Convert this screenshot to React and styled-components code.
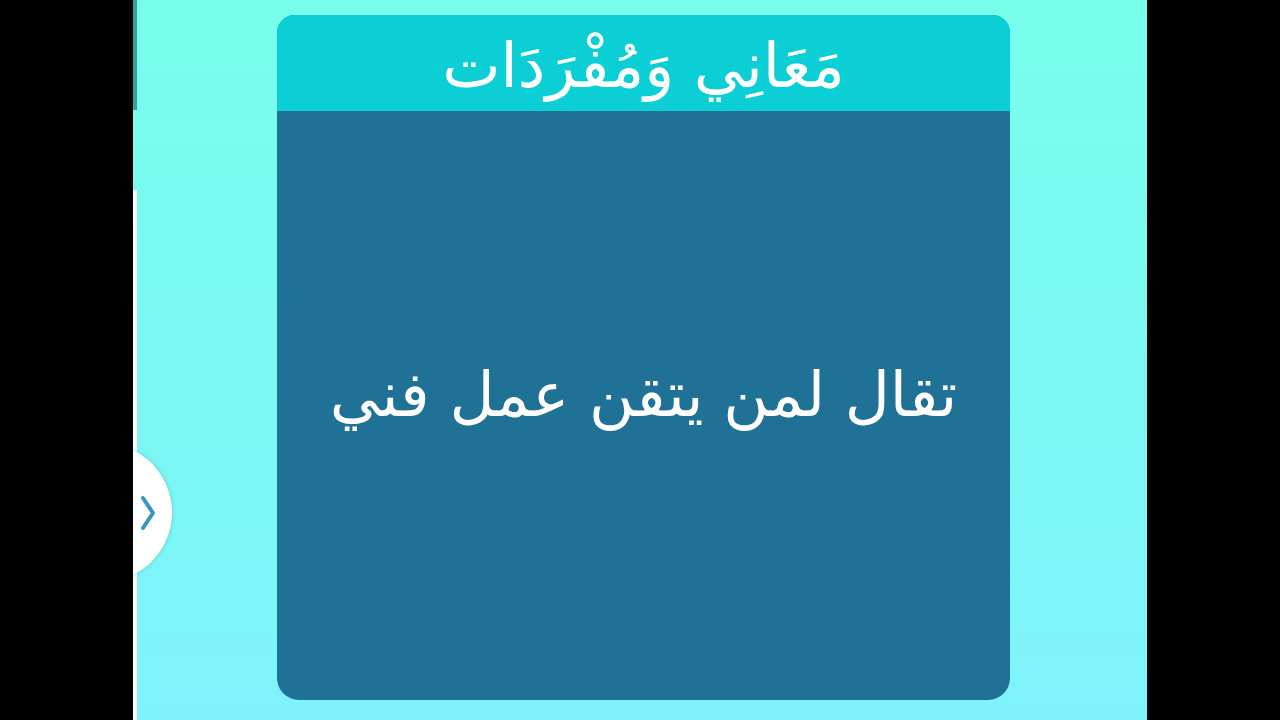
import styled, { createGlobalStyle } from 'styled-components';

const Global = createGlobalStyle`
  html, body { margin: 0; padding: 0; background: #000; }
  body { font-family: "DejaVu Sans", "Noto Sans", sans-serif; }
`;

const Screen = styled.div`
  width: 1280px;
  height: 720px;
  display: flex;
  background: #000;
  overflow: hidden;
`;

const Side = styled.div`
  width: ${p => p.$w}px;
  flex-shrink: 0;
  background: #000;
`;

const Stage = styled.main`
  position: relative;
  width: 1014px;
  height: 720px;
  display: flex;
  overflow: hidden;
  background: linear-gradient(180deg, #78fdeb 0%, #7bf8f2 50%, #7ff3fc 100%);
`;

const EdgeStrip = styled.div`
  width: 4px;
  flex-shrink: 0;
  display: flex;
  flex-direction: column;
`;

const EdgePart = styled.div`
  height: ${p => (p.$h ? `${p.$h}px` : 'auto')};
  flex: ${p => (p.$h ? 'none' : 1)};
  background: ${p => p.$c};
`;

const CardArea = styled.div`
  flex: 1;
  display: flex;
  padding: 15px 137px 20px 140px;
`;

const Card = styled.section`
  flex: 1;
  display: flex;
  flex-direction: column;
  border-radius: 18px 18px 22px 22px;
  overflow: hidden;
  background: #1f7196;
`;

const Header = styled.header`
  height: 96px;
  background: #0ccfd6;
  display: flex;
  align-items: center;
  justify-content: center;
  color: #fff;
  font-size: 62px;
  line-height: 1;
  padding-top: 6px;
  box-sizing: border-box;
`;

const Body = styled.div`
  flex: 1;
  display: flex;
  align-items: center;
  justify-content: center;
  color: #fff;
  font-size: 62px;
  line-height: 1;
  padding-bottom: 22px;
`;

const SideTab = styled.button`
  position: absolute;
  left: -100px;
  top: 443px;
  width: 139px;
  height: 139px;
  border: none;
  border-radius: 50%;
  background: #fff;
  box-shadow: 0 0 4px rgba(0, 80, 90, 0.25);
  display: flex;
  align-items: center;
  justify-content: flex-end;
  padding: 0 16px 0 0;
  cursor: pointer;
`;

export default function App() {
  return (
    <Screen>
      <Global />
      <Side $w={133} />
      <Stage>
        <EdgeStrip>
          <EdgePart $h={110} $c="#2aa49c" />
          <EdgePart $h={80} $c="transparent" />
          <EdgePart $c="#ffffff" />
        </EdgeStrip>
        <CardArea>
          <Card>
            <Header dir="rtl">مَعَانِي وَمُفْرَدَات</Header>
            <Body dir="rtl">تقال لمن يتقن عمل فني</Body>
          </Card>
        </CardArea>
        <SideTab aria-label="next">
          <svg width="16" height="36" viewBox="0 0 16 36">
            <path d="M3 3 L13 18 L3 33" fill="none" stroke="#3a94c4" strokeWidth="4" strokeLinecap="round" strokeLinejoin="round" />
          </svg>
        </SideTab>
      </Stage>
      <Side $w={133} />
    </Screen>
  );
}
